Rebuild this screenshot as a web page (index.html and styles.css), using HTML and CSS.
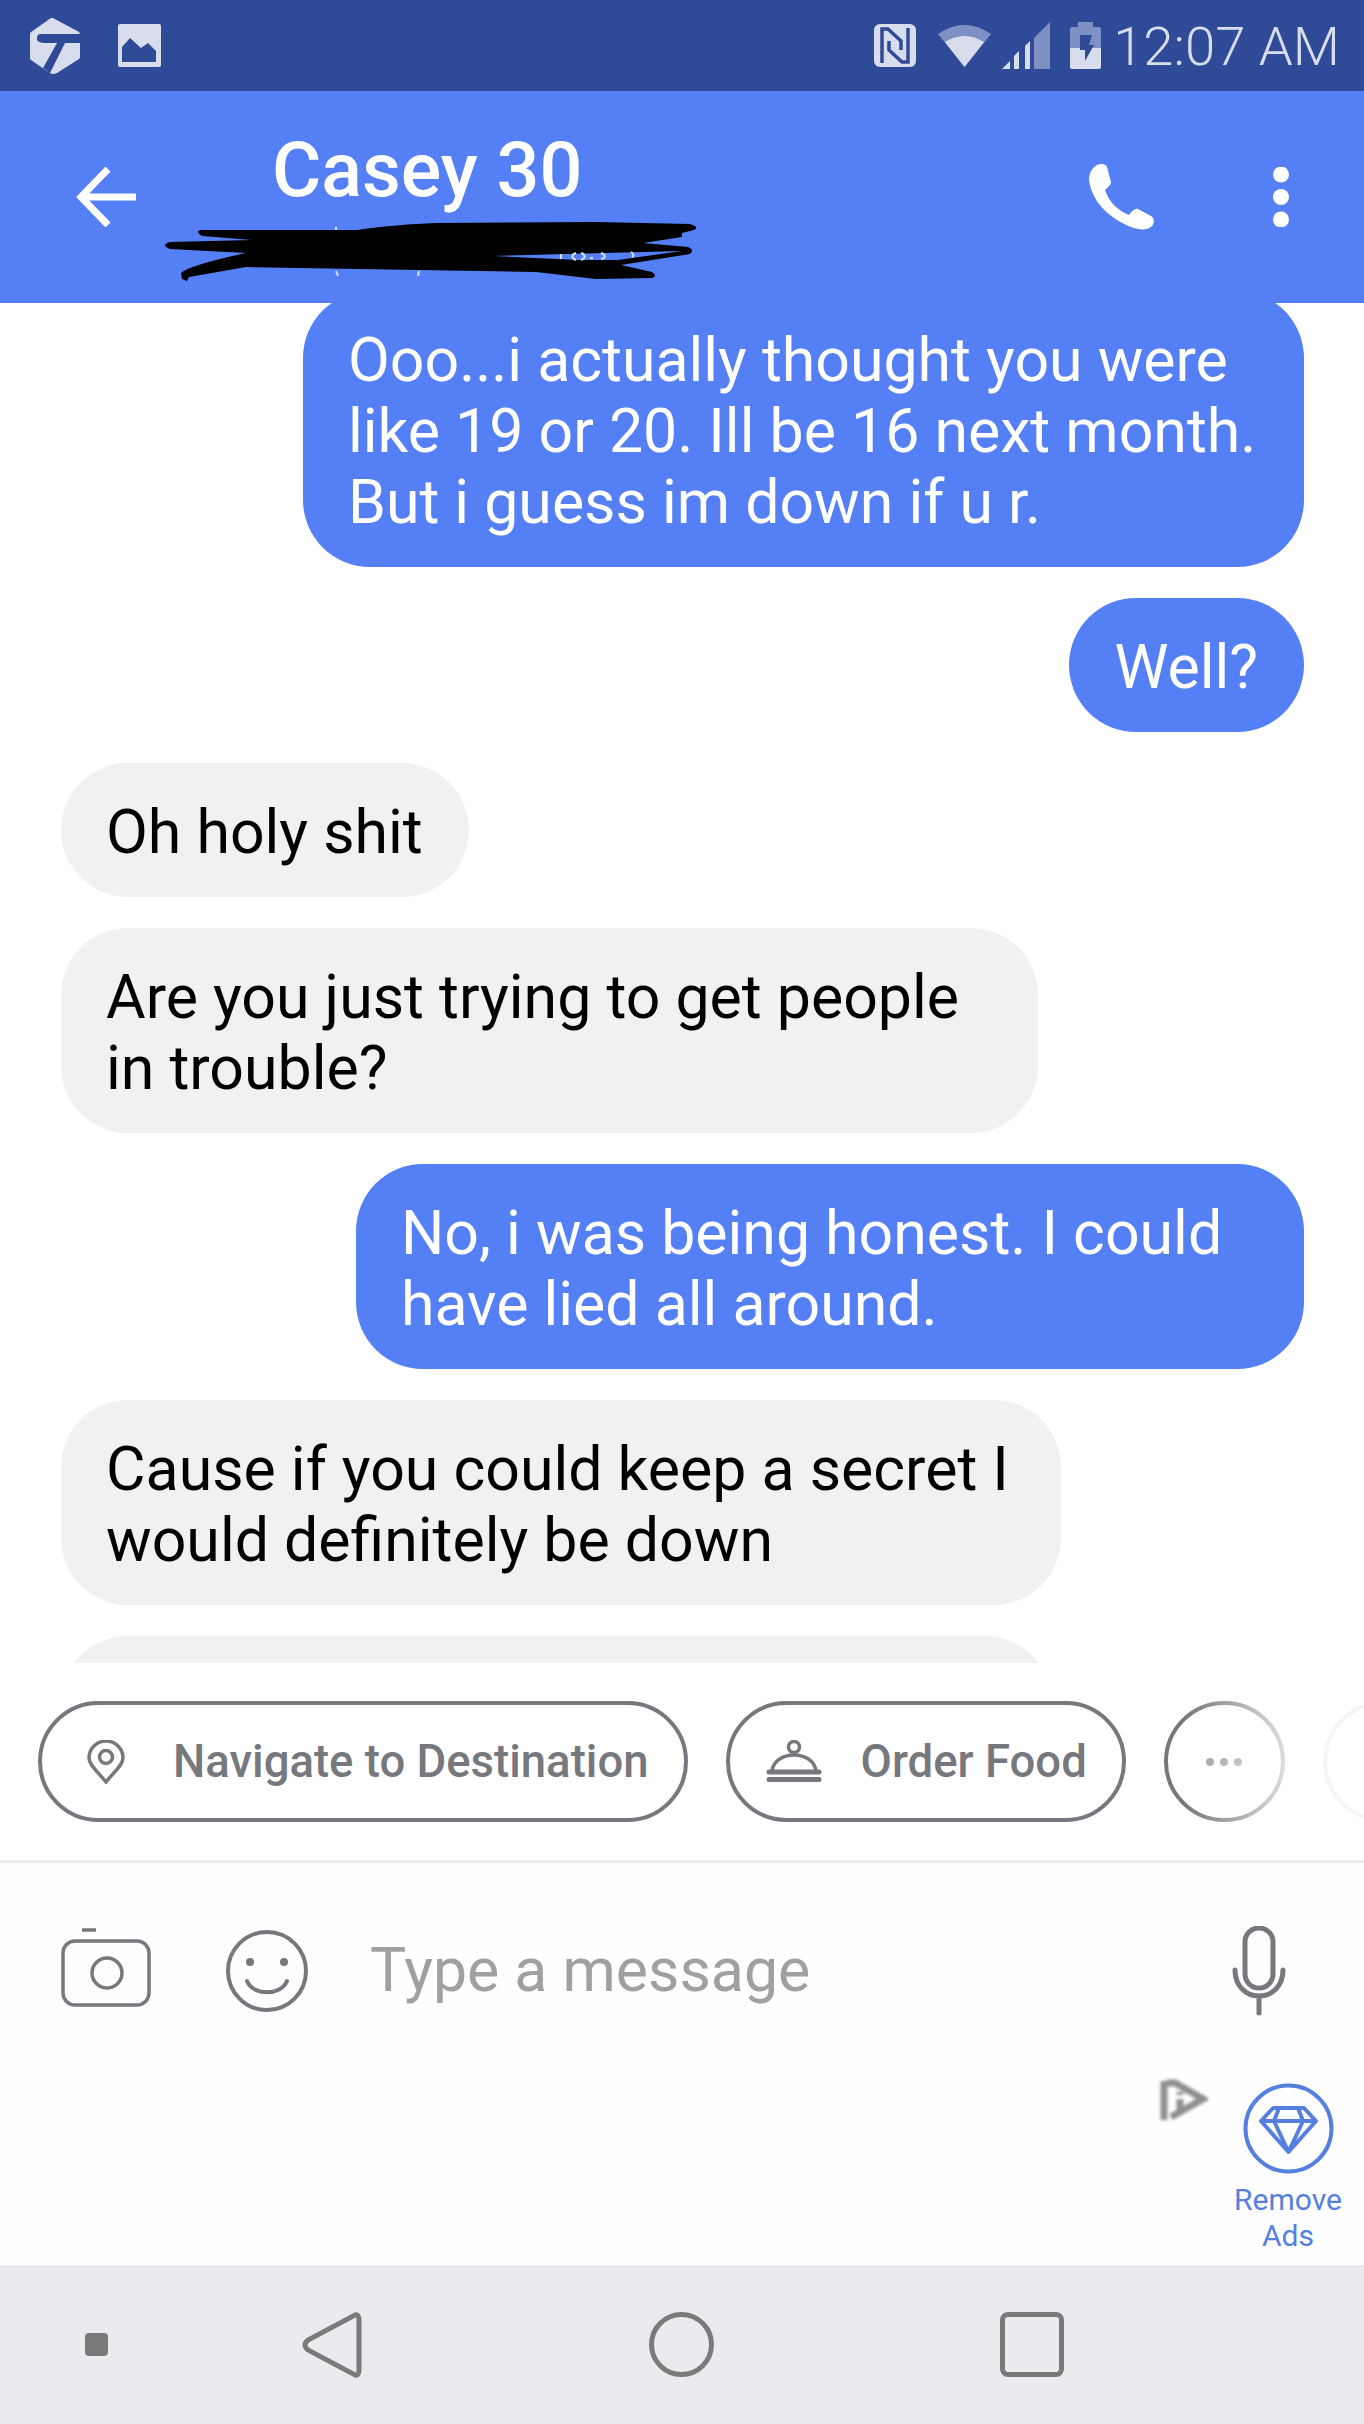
FILE: index.html
```html
<!DOCTYPE html>
<html lang="en">
<head>
<meta charset="utf-8">
<title>Casey 30</title>
<link rel="stylesheet" href="styles.css">
</head>
<body>
<div class="app">
  <div class="status">
    <svg class="logo" viewBox="0 0 52 56"><path class="lt" d="M24 0 L50 14 Q51 15 51 16 V39 Q51 40 50 41 L28 55 Q24 57 21 55 L15 51 L2 42 Q1 41 1 40 V16 Q1 15 2 14 L22 0 Q23 -.5 24 0Z"/><path class="dk" d="M12 16 H52 V25 H36 L21 55 L14 50 L28 25 H14 Q7 24 8 20 Q8 16 12 16Z"/></svg>
    <svg class="pic" viewBox="0 0 43 43"><rect class="lt" width="43" height="43" rx="2"/><path class="dk" d="M4 23 L12 14 L23 24 L30 19 L38 27 V38 H4Z"/></svg>
    <div class="status-right">
      <svg class="nfc" viewBox="0 0 42 43"><rect class="lt" width="42" height="43" rx="6"/><path class="dk-t" d="M8 39 V5 H14 L27 17 V26"/><path class="dk-t" d="M34 4 V38 H28 L15 26 V17"/></svg>
      <svg class="wifi" viewBox="0 0 53 42"><path class="lt faint" d="M0 9 Q26.500 -9 53 9 L26.500 42Z"/><path class="lt" d="M7 17 Q26.500 5 46 17 L26.500 42Z"/></svg>
      <svg class="signal" viewBox="0 0 48 47"><path class="lt faint" d="M32 16 L48 0 V47 H32Z"/><path class="lt" d="M0 47 L8 39 V47Z M12 34 L17 29 V47 H12Z M23 24 L28 19 V47 H23Z"/></svg>
      <svg class="battery" viewBox="0 0 31 47"><path class="lt faint" d="M8 0 H23 V5 H29 Q31 5 31 7 V26 H0 V7 Q0 5 2 5 H8Z"/><path class="lt" d="M0 26 H31 V45 Q31 47 29 47 H2 Q0 47 0 45Z"/><path class="dk" d="M10 13 H22 L19 23 H24 L15 39 V28 H10Z"/></svg>
      <span class="time">12:07 AM</span>
    </div>
  </div>

  <header class="header">
    <svg class="back" viewBox="0 0 61 60"><path d="M60 30 H6 M32 2 L5 30 L32 58"/></svg>
    <div class="title">Casey 30</div>
    <svg class="phone" viewBox="0 0 65 66"><path d="M8 1 C12 -1 17 0 18 3 L22 18 C22 21 19 23 16 26 C20 38 28 46 40 51 C43 47 46 44 49 45 L62 52 C66 54 65 60 63 62 C58 67 50 66 42 63 C20 54 3 38 0 16 C0 9 3 4 8 1Z"/></svg>
    <svg class="kebab" viewBox="0 0 16 60"><circle cx="8" cy="7.500" r="8"/><circle cx="8" cy="30" r="8"/><circle cx="8" cy="52.500" r="8"/></svg>
    <svg class="scribble" viewBox="0 0 1364 303">
      <path class="specks" d="M336 227 V232 M336 271 L338 276 M419 271 L418 276"/>
      <path class="ink" d="M200 230 L357 230 C385 226 410 224 436 223 L596 222 L690 224 Q700 227 694 230 L682 233 L682 237 L643 243 L688 247 Q695 250 690 254 L621 265 L652 272 Q658 276 652 278 L596 279 L536 272 L246 267 L189 277 L187 281 L182 279 L181 273 Q190 265 246 253 L170 249 Q160 245 170 242 L252 240 L202 236 Q195 232 200 230Z"/>
      <path class="wedge" d="M493 256 L682 251 L618 260 L579 260Z"/>
      <path class="specks" d="M561 254 V259 M576 253 C571 255 571 258 576 260 M581 253 C586 255 586 258 581 260 M590 258 H593 M601 253 C606 255 606 258 601 259 M631 252 C634 254 634 256 632 257"/>
    </svg>
  </header>

  <main class="thread">
    <div class="bubble out w-first">Ooo...i actually thought you were like 19 or 20. Ill be 16 next month. But i guess im down if u r.</div>
    <div class="bubble out">Well?</div>
    <div class="bubble in">Oh holy shit</div>
    <div class="bubble in w-trouble">Are you just trying to get people in trouble?</div>
    <div class="bubble out w-honest">No, i was being honest. I could have lied all around.</div>
    <div class="bubble in w-secret">Cause if you could keep a secret I would definitely be down</div>
    <div class="bubble in w-clipped"></div>
  </main>

  <section class="chips">
    <div class="chip">
      <svg class="chip-icon" viewBox="0 0 72 44"><path d="M36 42 C28 32 19 25 19 18 A17 17 0 0 1 53 18 C53 25 44 32 36 42Z"/><circle cx="36" cy="17" r="6.500"/></svg>
      <span>Navigate to Destination</span>
    </div>
    <div class="chip">
      <svg class="chip-icon" viewBox="0 0 72 44"><circle cx="36" cy="7" r="5.500"/><path d="M14 31 C15 21 25 15 36 15 C47 15 57 21 58 31"/><path class="thick" d="M11 32 H61 M11 39.500 H61"/></svg>
      <span>Order Food</span>
    </div>
    <div class="chip more">
      <svg class="more-dots" viewBox="0 0 36 8"><circle cx="4" cy="4" r="4"/><circle cx="18" cy="4" r="4"/><circle cx="32" cy="4" r="4"/></svg>
    </div>
    <div class="chip more"></div>
    <div class="chips-fade"></div>
  </section>

  <section class="composer">
    <svg class="camera" viewBox="0 0 94 88"><path d="M24 3 H38" class="tick"/><rect x="5" y="14" width="86" height="64" rx="12"/><ellipse cx="49" cy="46" rx="15" ry="15"/></svg>
    <svg class="smile" viewBox="0 0 84 84"><circle cx="42" cy="42" r="39"/><circle class="eye" cx="25" cy="33" r="4"/><circle class="eye" cx="59" cy="33" r="4"/><path d="M22 52 C28 67 56 67 62 52"/></svg>
    <div class="placeholder">Type a message</div>
    <svg class="mic" viewBox="0 0 54 90"><rect x="13" y="2" width="28" height="60" rx="14"/><path d="M3 44 C3 60 14 70 27 70 C40 70 51 60 51 44 M27 70 V87"/></svg>
  </section>

  <section class="adrow">
    <svg class="ad-mark" viewBox="0 0 49 43"><path d="M5 2 V41 M8 4 H16 L44 20 L12 38 M21 13 V16 M21 20 V31"/></svg>
    <div class="remove">
      <svg class="gem" viewBox="0 0 91 91"><circle cx="45.500" cy="45.500" r="43"/><path d="M30 25 H61 L73 38 L45.500 69 L18 38Z M18 38 H73 M36 25 L31 38 L45.500 69 L60 38 L55 25"/></svg>
      <div class="remove-label">Remove<br>Ads</div>
    </div>
  </section>

  <nav class="navbar">
    <div class="nav-dot"></div>
    <svg class="nav-back" viewBox="0 0 60 66"><path d="M53 3 Q57 2 57 8 V58 Q57 64 53 63 L6 38 Q0 33 6 28Z"/></svg>
    <div class="nav-home"></div>
    <div class="nav-recent"></div>
  </nav>
</div>
</body>
</html>
```

FILE: styles.css
```css
* { box-sizing: border-box; }
html, body { margin: 0; padding: 0; background: #fff; }
body { font-family: Roboto, "Liberation Sans", sans-serif; }
svg { display: block; flex: none; }

.app { width: 1364px; height: 2424px; display: flex; flex-direction: column; overflow: hidden; background: #fff; }

/* status bar */
.status { height: 91px; flex: none; background: #2f4a97; display: flex; align-items: center; padding: 0 24px 0 29px; }
.lt { fill: #d7dded; }
.faint { fill: #7e90c4; }
.dk { fill: #2f4a97; }
.dk-t { fill: none; stroke: #2f4a97; stroke-width: 3.500; }
.logo { width: 52px; height: 56px; }
.pic { width: 43px; height: 43px; margin-left: 37px; }
.status-right { margin-left: auto; display: flex; align-items: center; }
.nfc { width: 42px; height: 43px; }
.wifi { width: 53px; height: 42px; margin-left: 22px; }
.signal { width: 48px; height: 47px; margin-left: 11px; }
.battery { width: 31px; height: 47px; margin-left: 20px; }
.time { margin-left: 12px; font-size: 54.500px; font-weight: 300; line-height: 60px; color: #d7dded; white-space: nowrap; }

/* header */
.header { position: relative; height: 212px; flex: none; background: #5580f5; display: flex; align-items: center; padding: 0 75px 0 76px; }
.back { width: 61px; height: 60px; }
.back path { fill: none; stroke: #fff; stroke-width: 7; }
.title { align-self: flex-start; margin: 37px 0 0 135px; font-size: 75.500px; font-weight: 500; line-height: 84px; color: #fff; white-space: nowrap; }
.phone { width: 65px; height: 66px; margin-left: auto; fill: #fff; }
.kebab { width: 16px; height: 60px; margin-left: 119px; fill: #fff; }
.scribble { position: absolute; left: 0; top: -91px; width: 1364px; height: 303px; overflow: visible; }
.scribble .ink { fill: #000; }
.scribble .wedge { fill: #5580f5; }
.scribble .specks { fill: none; stroke: #d5dff8; stroke-width: 2; }

/* thread */
.thread { height: 1360px; flex: none; overflow: hidden; display: flex; flex-direction: column; gap: 31px; padding: 0 60px 0 61px; background: #fff; }
.thread > :first-child { margin-top: -12px; }
.bubble { flex: none; border-radius: 67px; padding: 34px 46px 29px 45px; font-size: 60.800px; line-height: 71px; }
.bubble.out { align-self: flex-end; background: #5580f5; color: #fff; }
.bubble.in { align-self: flex-start; background: #f1f1f2; color: #000; }
.w-first { width: 1001px; }
.w-trouble { width: 977px; }
.w-honest { width: 948px; }
.w-secret { width: 1000px; }
.w-clipped { width: 991px; height: 205px; }

/* chips */
.chips { position: relative; height: 200px; flex: none; display: flex; gap: 38px; padding: 38px 0 38px 38px; overflow: hidden; border-bottom: 3px solid #eeeef0; }
.chip { flex: none; height: 121px; border: 4px solid #76787e; border-radius: 61px; display: flex; align-items: center; gap: 31px; padding: 0 35px 0 28px; color: #76787e; font-size: 45.500px; font-weight: 500; white-space: nowrap; }
.chip-icon { width: 72px; height: 44px; }
.chip-icon path, .chip-icon circle { fill: none; stroke: #76787e; stroke-width: 3.500; }
.chip-icon .thick { stroke-width: 5; stroke-linecap: round; }
.more { width: 121px; padding: 0; justify-content: center; }
.more-dots { width: 36px; height: 8px; fill: #9a9a9f; }
.chips-fade { position: absolute; right: 0; top: 0; width: 180px; height: 197px; background: linear-gradient(to right, rgba(255,255,255,0), rgba(255,255,255,.93) 70%); }

/* composer */
.composer { height: 216px; flex: none; display: flex; align-items: center; padding: 0 78px 0 58px; background: #fefefe; }
.camera { width: 94px; height: 88px; }
.camera rect, .camera ellipse, .camera .tick { fill: none; stroke: #76787e; stroke-width: 3.500; }
.smile { width: 84px; height: 84px; margin-left: 73px; }
.smile circle, .smile path { fill: none; stroke: #76787e; stroke-width: 4; }
.smile .eye { fill: #76787e; stroke: none; }
.smile path { stroke-linecap: round; }
.placeholder { margin-left: 61px; font-size: 60.800px; line-height: 70px; color: #a0a0a0; white-space: nowrap; }
.mic { width: 54px; height: 90px; margin-left: auto; }
.mic rect, .mic path { fill: none; stroke: #76787e; stroke-width: 5; stroke-linecap: round; }

/* ad row */
.adrow { height: 186px; flex: none; display: flex; justify-content: flex-end; align-items: flex-start; padding-right: 16px; background: #fefefe; }
.ad-mark { width: 49px; height: 43px; margin-right: 20px; filter: blur(1.500px); }
.ad-mark path { fill: none; stroke: #8f8f8f; stroke-width: 7; }
.remove { width: 120px; display: flex; flex-direction: column; align-items: center; padding-top: 4px; }
.gem { width: 91px; height: 91px; margin-bottom: 8px; }
.gem circle, .gem path { fill: none; stroke: #5580e0; stroke-width: 4; stroke-linejoin: round; }
.remove-label { font-size: 30px; line-height: 36px; color: #5580e0; text-align: center; }

/* nav */
.navbar { height: 159px; flex: none; background: #e9ebef; position: relative; display: flex; align-items: center; padding: 0 0 0 85px; }
.nav-dot { width: 23px; height: 23px; border-radius: 4px; background: #7a7a7a; }
.nav-back { width: 60px; height: 66px; margin-left: 194px; }
.nav-back path { fill: none; stroke: #7a7a7a; stroke-width: 5; }
.nav-home { width: 65px; height: 65px; margin-left: 287px; border: 5px solid #7a7a7a; border-radius: 50%; }
.nav-recent { width: 64px; height: 65px; margin-left: 286px; border: 5px solid #7a7a7a; border-radius: 8px; }
```
